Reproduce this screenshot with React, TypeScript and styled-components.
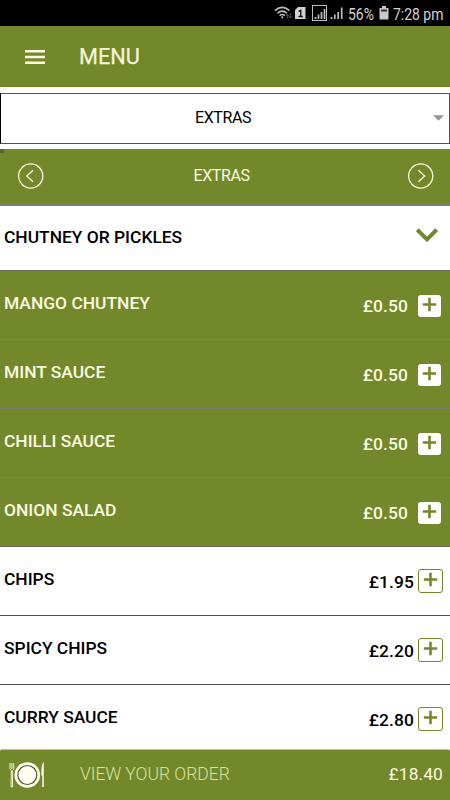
import React from 'react';
import styled, { createGlobalStyle } from 'styled-components';

const GREEN = '#73882a';
const CREAM = '#f9fbe0';

const GlobalStyle = createGlobalStyle`
  * { box-sizing: border-box; }
  body { margin: 0; background: #fff; font-family: Roboto, sans-serif; color: #000; }
`;

const Screen = styled.div`
  width: 450px;
  height: 800px;
  overflow: hidden;
  display: flex;
  flex-direction: column;
  background: #fff;
`;

const StatusBar = styled.div`
  flex: none;
  height: 26px;
  overflow: hidden;
  display: flex;
  padding-left: 270px;
  background: #000;
  color: #d2d2d2;
`;

const StatusIcons = styled.svg`
  flex: none;
  width: 75px;
  height: 26px;
  margin-right: 3px;
`;

const BatteryIcon = styled.svg`
  flex: none;
  width: 10px;
  height: 26px;
  margin-right: 4px;
`;

const StatusText = styled.span<{ $width: number }>`
  flex: none;
  width: ${(p) => p.$width}px;
  font-size: 17px;
  line-height: 28px;
  white-space: nowrap;
`;

const Condensed = styled.span<{ $scale: number }>`
  display: inline-block;
  transform: scaleX(${(p) => p.$scale});
  transform-origin: 0 50%;
`;

const Header = styled.header`
  flex: 0 0 61px;
  display: flex;
  align-items: center;
  padding-left: 25px;
  background: ${GREEN};
  border-bottom: 1px solid #6b7f2a;
`;

const MenuIcon = styled.svg`
  width: 20px;
  height: 14px;
  margin-top: 1px;
`;

const Title = styled.h1`
  margin: 2px 0 0 34px;
  font-size: 21.7px;
  font-weight: 400;
  line-height: 26px;
  color: #f5f2dc;
  -webkit-text-stroke: 0.25px #f5f2dc;
`;

const SelectBox = styled.div`
  flex: 0 0 51px;
  margin: 6px 0 5px;
  display: grid;
  grid-template-columns: 1fr 16px;
  align-items: center;
  border: 1px solid #555;
  border-left-color: #000;
  font-size: 16px;
`;

const SelectValue = styled.span`
  padding: 0 0 3px 12px;
  text-align: center;
  letter-spacing: -0.4px;
`;

const Caret = styled.svg`
  width: 11px;
  height: 6px;
  margin-bottom: 2px;
`;

const CategoryBar = styled.nav`
  flex: 0 0 57px;
  display: grid;
  grid-template-columns: 26px 1fr 26px;
  align-items: center;
  padding: 0 16px 2px 18px;
  background: linear-gradient(#5a6434, #5a6434) 0 0 / 4px 4px no-repeat ${GREEN};
  border-bottom: 2px solid #7c7f72;
  color: ${CREAM};
  font-size: 16px;
`;

const CategoryName = styled.span`
  padding-right: 9px;
  text-align: center;
  letter-spacing: -0.4px;
`;

const RoundIcon = styled.svg`
  width: 26px;
  height: 26px;
`;

const Group = styled.div`
  flex: 0 0 65px;
  display: flex;
  justify-content: space-between;
  padding: 0 12px 0 4px;
  border-bottom: 1px solid #6a6d5b;
`;

const ItemName = styled.span<{ $top?: number }>`
  font-size: 17.4px;
  font-weight: 500;
  line-height: 20px;
  margin-top: ${(p) => p.$top ?? 22}px;
  white-space: nowrap;
`;

const ChevronIcon = styled.svg`
  width: 22px;
  height: 14px;
  margin-top: 22px;
`;

const List = styled.div`
  flex: 0 0 478px;
  overflow: hidden;
`;

const Row = styled.div<{ $filled: boolean; $lastFilled: boolean }>`
  height: 69px;
  display: flex;
  padding-left: 4px;
  background: ${(p) => (p.$filled ? GREEN : '#fff')};
  color: ${(p) => (p.$filled ? CREAM : '#000')};
  border-bottom: 1px solid ${(p) => (p.$filled ? (p.$lastFilled ? '#6a6d5b' : '#7e7f70') : '#505050')};
`;

const Price = styled.span`
  margin: 25px 0 0 auto;
  font-size: 17.4px;
  font-weight: 500;
  line-height: 20px;
  letter-spacing: 0.1px;
`;

const AddButton = styled.button<{ $filled: boolean }>`
  display: block;
  width: ${(p) => (p.$filled ? 23 : 25)}px;
  height: ${(p) => (p.$filled ? 22 : 24)}px;
  margin: ${(p) => (p.$filled ? '23.5px 9px 0 10px' : '22px 7px 0 4px')};
  padding: 0;
  border: ${(p) => (p.$filled ? '0' : `1px solid ${GREEN}`)};
  border-radius: 3px;
  background: #fff;
  line-height: 0;
`;

const PlusIcon = styled.svg`
  display: block;
  width: 100%;
  height: 100%;
`;

const OrderBar = styled.footer`
  flex: 0 0 51px;
  display: flex;
  align-items: center;
  padding: 0 7px 0 9px;
  background: ${GREEN};
  border-top: 1px solid #b8c094;
  border-radius: 2px 2px 0 0;
  color: ${CREAM};
`;

const PlateIcon = styled.svg`
  width: 36px;
  height: 28px;
`;

const OrderLabel = styled.span`
  margin: -2px 0 0 35px;
  font-size: 17.5px;
  font-weight: 300;
  color: #d7e39c;
`;

const Total = styled.span`
  margin: -2px 0 0 auto;
  font-size: 17.4px;
  letter-spacing: 0.1px;
`;

const items = [
  { name: 'MANGO CHUTNEY', price: '£0.50', filled: true },
  { name: 'MINT SAUCE', price: '£0.50', filled: true },
  { name: 'CHILLI SAUCE', price: '£0.50', filled: true },
  { name: 'ONION SALAD', price: '£0.50', filled: true },
  { name: 'CHIPS', price: '£1.95', filled: false },
  { name: 'SPICY CHIPS', price: '£2.20', filled: false },
  { name: 'CURRY SAUCE', price: '£2.80', filled: false },
];

function Arrow({ direction }: { direction: 'left' | 'right' }) {
  return (
    <RoundIcon viewBox="0 0 26 26" fill="none" stroke={CREAM} strokeWidth="1.3">
      <circle cx="12.7" cy="13" r="12.1" />
      <path d={direction === 'left' ? 'M15 7.2 8.8 13 15 18.8' : 'M10.4 7.2 16.6 13 10.4 18.8'} />
    </RoundIcon>
  );
}

export default function App() {
  return (
    <Screen>
      <GlobalStyle />
      <StatusBar>
        <StatusIcons viewBox="270 0 75 26" fill="none" stroke="#bdbdbd">
          <path d="M275 10.6Q282.200 4.200 289.400 10.600M277.400 13.200Q282.200 9 287 13.200M279.600 15.600Q282.200 13.400 284.800 15.600" strokeWidth="1.5" />
          <circle cx="282.200" cy="17.300" r="1.100" fill="#bdbdbd" stroke="none" />
          <path d="M287.300 18.500v-4M285.900 15.800l1.400-1.500 1.400 1.500M290.300 13.500v4M288.900 16.300l1.400 1.500 1.400-1.500" stroke="#555" strokeWidth="1" />
          <path d="M298 7h7.500v12H295V10z" fill="#d2d2d2" stroke="none" />
          <path d="M298.700 11.300 300.700 10.300V16.500M298.500 16.500h4.300" stroke="#111" strokeWidth="1.400" />
          <rect x="312.500" y="5.500" width="14" height="15" />
          <path d="M315.500 19v-2M318.500 19v-4.500M321.500 19v-7M324.500 19V9" strokeWidth="1.700" />
          <path d="M331.500 19v-2M334.800 19v-4.500M338.200 19v-7M341.700 19V7.500" strokeWidth="1.700" />
        </StatusIcons>
        <StatusText $width={31}><Condensed $scale={0.82}>56%</Condensed></StatusText>
        <BatteryIcon viewBox="0 0 10 26">
          <path d="M3 6h4v2h2.500v11.500h-9V8H3z" fill="#c8c8c8" />
          <path d="M2 9.500h6v2H2z" fill="#333" />
        </BatteryIcon>
        <StatusText $width={57}><Condensed $scale={0.82}>7:28 pm</Condensed></StatusText>
      </StatusBar>

      <Header>
        <MenuIcon viewBox="0 0 20 14"><path d="M0 1.200h20M0 7h20M0 12.800h20" stroke={CREAM} strokeWidth="2.400" /></MenuIcon>
        <Title>MENU</Title>
      </Header>

      <SelectBox>
        <SelectValue>EXTRAS</SelectValue>
        <Caret viewBox="0 0 11 6"><path d="M0 .3h11L5.500 5.800z" fill="#969696" /></Caret>
      </SelectBox>

      <CategoryBar>
        <Arrow direction="left" />
        <CategoryName>EXTRAS</CategoryName>
        <Arrow direction="right" />
      </CategoryBar>

      <Group>
        <ItemName $top={21}>CHUTNEY OR PICKLES</ItemName>
        <ChevronIcon viewBox="0 0 22 14"><path d="M1.300 1.700 11 11.400 20.700 1.700" fill="none" stroke={GREEN} strokeWidth="3.900" /></ChevronIcon>
      </Group>

      <List>
        {items.map((item, i) => (
          <Row key={item.name} $filled={item.filled} $lastFilled={item.filled && !items[i + 1]?.filled}>
            <ItemName>{item.name}</ItemName>
            <Price>{item.price}</Price>
            <AddButton $filled={item.filled} aria-label={`Add ${item.name}`}>
              <PlusIcon viewBox="0 0 23 23"><path d="M4.500 10h14M11.500 3v14" stroke={GREEN} strokeWidth="2.700" /></PlusIcon>
            </AddButton>
          </Row>
        ))}
      </List>

      <OrderBar>
        <PlateIcon viewBox="0 0 36 28">
          <circle cx="18.300" cy="14" r="12.800" fill="#fffef0" />
          <circle cx="18.300" cy="14" r="9.500" fill="none" stroke="#4d5928" strokeWidth="1.200" />
          <path d="M1 2v5.500q0 1.500 1.400 2.200L2 26h1.600L3.300 9.700Q4.700 9 4.700 7.500V2M2.850 2v6" fill="none" stroke="#fffef0" strokeWidth=".9" />
          <path d="M34.700 1Q32.200 3 32.300 14.500h1V26h1.500z" fill="#fffef0" />
        </PlateIcon>
        <OrderLabel>VIEW YOUR ORDER</OrderLabel>
        <Total>£18.40</Total>
      </OrderBar>
    </Screen>
  );
}
